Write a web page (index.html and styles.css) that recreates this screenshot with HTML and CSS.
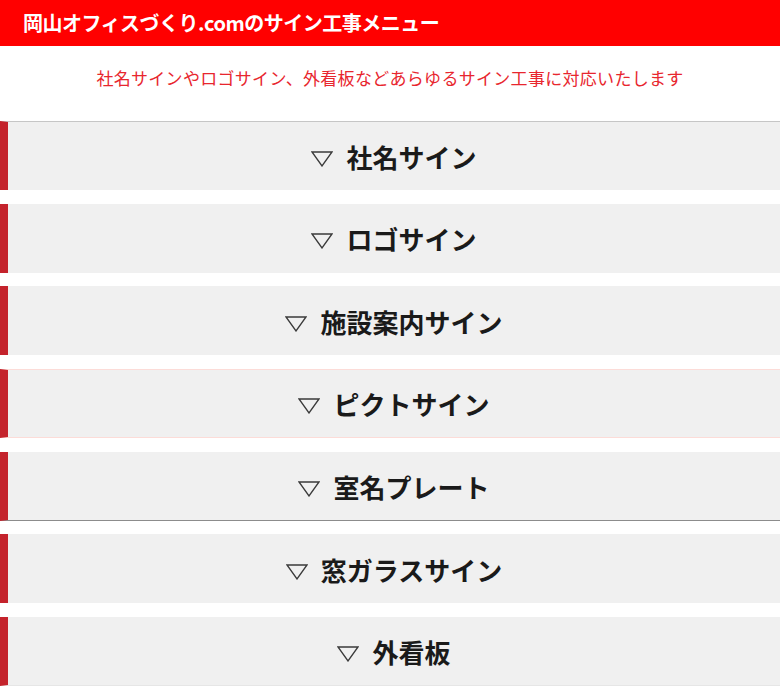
FILE: index.html
```html
<!DOCTYPE html>
<html lang="ja">
<head>
    <meta charset="UTF-8">
    <meta name="viewport" content="width=device-width, initial-scale=1.0">
    <title>岡山オフィスづくり.comのサイン工事メニュー</title>
    <link rel="stylesheet" href="styles.css">
</head>
<body>

<div class="menu">
    <h2 class="menu-title">岡山オフィスづくり.comのサイン工事メニュー</h2>
    <p class="menu-lead">社名サインやロゴサイン、外看板などあらゆるサイン工事に対応いたします</p>

    <ul class="menu-list">
        <li class="menu-item first"><svg class="mark" width="22" height="16" viewBox="0 0 22 16"><polygon points="1,1 21,1 11,15" fill="none" stroke="#3a3a3a" stroke-width="1.3"/></svg>社名サイン</li>
        <li class="menu-item"><svg class="mark" width="22" height="16" viewBox="0 0 22 16"><polygon points="1,1 21,1 11,15" fill="none" stroke="#3a3a3a" stroke-width="1.3"/></svg>ロゴサイン</li>
        <li class="menu-item"><svg class="mark" width="22" height="16" viewBox="0 0 22 16"><polygon points="1,1 21,1 11,15" fill="none" stroke="#3a3a3a" stroke-width="1.3"/></svg>施設案内サイン</li>
        <li class="menu-item pink"><svg class="mark" width="22" height="16" viewBox="0 0 22 16"><polygon points="1,1 21,1 11,15" fill="none" stroke="#3a3a3a" stroke-width="1.3"/></svg>ピクトサイン</li>
        <li class="menu-item gray"><svg class="mark" width="22" height="16" viewBox="0 0 22 16"><polygon points="1,1 21,1 11,15" fill="none" stroke="#3a3a3a" stroke-width="1.3"/></svg>室名プレート</li>
        <li class="menu-item"><svg class="mark" width="22" height="16" viewBox="0 0 22 16"><polygon points="1,1 21,1 11,15" fill="none" stroke="#3a3a3a" stroke-width="1.3"/></svg>窓ガラスサイン</li>
        <li class="menu-item last"><svg class="mark" width="22" height="16" viewBox="0 0 22 16"><polygon points="1,1 21,1 11,15" fill="none" stroke="#3a3a3a" stroke-width="1.3"/></svg>外看板</li>
    </ul>
</div>

</body>
</html>
```

FILE: styles.css
```css
body {
    font-family: "Noto Sans CJK JP", "Noto Sans", sans-serif;
    margin: 0;
    padding: 0;
    background-color: #fff;
}

.menu-title {
    margin: 0;
    height: 46px;
    padding: 0 23px;
    line-height: 46px;
    background-color: #ff0000;
    color: #fff;
    font-size: 20px;
    font-weight: bold;
    letter-spacing: -0.5px;
}

.menu-lead {
    margin: 0;
    padding: 20px 0 31px;
    line-height: 24px;
    text-align: center;
    color: #e8262e;
    font-size: 17px;
    letter-spacing: 0.3px;
}

.menu-list {
    list-style: none;
    margin: 0;
    padding: 0;
}

.menu-item {
    display: flex;
    align-items: center;
    justify-content: center;
    gap: 13px;
    box-sizing: border-box;
    height: 69px;
    padding-top: 1px;
    margin-bottom: 13.67px;
    border-left: 8px solid #c4232c;
    background-color: #f0f0f0;
    color: #1a1a1a;
    font-size: 26px;
    font-weight: bold;
}

.menu-item .mark {
    flex: none;
    margin-top: 5px;
}

.menu-item.first {
    border-top: 1px solid #c6c6c6;
}

.menu-item.pink {
    border-top: 1px solid #fcdcd8;
    border-bottom: 1px solid #fcdcd8;
}

.menu-item.gray {
    border-bottom: 1px solid #8c8c8c;
}

.menu-item.last {
    border-bottom: 1px solid #e6e6e6;
}
```
